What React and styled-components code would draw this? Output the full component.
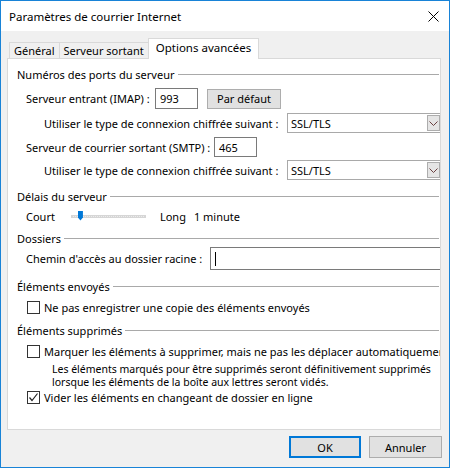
import React from "react"
import styled, { createGlobalStyle } from "styled-components"

const FONT = '"Noto Sans", "Open Sans", sans-serif'

const Global = createGlobalStyle`
  html, body { margin: 0; padding: 0; background: #fff; }
  body { font-family: ${FONT}; font-size: 11px; color: #000; }
  * { box-sizing: border-box; }
`

const Window = styled.div`
  width: 450px;
  height: 468px;
  border: 1px solid #1883d7;
  display: flex;
  flex-direction: column;
  overflow: hidden;
`

const TitleBar = styled.div`
  height: 30px;
  flex: none;
  background: #fff;
  display: flex;
  align-items: center;
  justify-content: space-between;
  padding: 0 10px 0 8px;
  font-size: 11.5px;
`

const Body = styled.div`
  flex: 1;
  background: #f0f0f0;
  padding: 7px 8px 0 6px;
  display: flex;
  flex-direction: column;
`

const TabStrip = styled.div`
  height: 20px;
  display: flex;
  align-items: flex-end;
  padding-left: 2px;
`

const Tab = styled.div`
  height: ${p => (p.active ? "21px" : "16px")};
  padding: 0 ${p => (p.active ? "7px" : "4px")};
  border: 1px solid #d9d9d9;
  border-bottom: none;
  border-right: ${p => (p.last ? "1px solid #d9d9d9" : "none")};
  background: ${p => (p.active ? "#fff" : "#f0f0f0")};
  display: flex;
  align-items: center;
  padding-bottom: ${p => (p.active ? "3px" : "0")};
  position: relative;
  margin-bottom: ${p => (p.active ? "-1px" : "0")};
  z-index: ${p => (p.active ? 1 : 0)};
  white-space: nowrap;
  font-size: ${p => (p.active ? "11.5px" : "11px")};
`

const Panel = styled.div`
  height: 372px;
  flex: none;
  background: #fff;
  border: 1px solid #d9d9d9;
  padding: 0 0 0 9px;
  display: flex;
  flex-direction: column;
  overflow: hidden;
`

const Group = styled.div`
  height: 16px;
  margin-top: ${p => p.mt}px;
  margin-right: 1px;
  display: flex;
  align-items: center;
  gap: 3px;
  white-space: nowrap;
  &::after {
    content: "";
    flex: 1;
    height: 1px;
    background: #a9a9a9;
    margin-top: 1px;
  }
`

const Row = styled.div`
  height: ${p => p.h || 16}px;
  margin-top: ${p => p.mt}px;
  padding-left: ${p => p.indent}px;
  display: flex;
  align-items: center;
  white-space: nowrap;
`

const Label = styled.span`
  width: ${p => (p.w ? p.w + "px" : "auto")};
  margin-left: ${p => p.ml || 0}px;
  flex: none;
`

const TextBox = styled.div`
  width: ${p => p.w}px;
  height: ${p => p.h || 21}px;
  flex: none;
  border: 1px solid #7a7a7a;
  background: #fff;
  display: flex;
  align-items: center;
  padding-left: 4px;
`

const Caret = styled.span`
  width: 1px;
  height: 14px;
  background: #000;
`

const Button = styled.div`
  width: ${p => p.w}px;
  height: ${p => p.h || 21}px;
  flex: none;
  border: ${p => (p.primary ? "2px solid #0078d7" : "1px solid #adadad")};
  background: #e1e1e1;
  display: flex;
  align-items: center;
  justify-content: center;
  margin-left: ${p => p.ml || 0}px;
`

const Select = styled.div`
  width: 153px;
  height: 20px;
  flex: none;
  margin-left: auto;
  border: 1px solid #a9a9a9;
  border-right: none;
  background: #fff;
  display: flex;
  align-items: center;
  padding-left: 3px;
`

const Arrow = styled.div`
  width: 13px;
  height: 16px;
  margin-left: auto;
  background: #e5e5e5;
  border: 1px solid #adadad;
  display: flex;
  align-items: center;
  justify-content: center;
`

const Slider = styled.div`
  width: 75px;
  height: 3px;
  margin: 0 14px 0 16px;
  background: repeating-linear-gradient(90deg, #d6d6d6 0 1px, #ececec 1px 2px);
  border: 1px solid #d6d6d6;
  position: relative;
`

const Thumb = styled.div`
  position: absolute;
  left: 6px;
  top: -5px;
  width: 5px;
  height: 10px;
  background: #0078d7;
  clip-path: polygon(0 0, 100% 0, 100% 70%, 50% 100%, 0 70%);
`

const Check = styled.div`
  width: 13px;
  height: 13px;
  flex: none;
  border: 1px solid #333;
  background: #fff;
  margin-right: 4px;
  display: flex;
  align-items: center;
  justify-content: center;
`

const Clip = styled.span`
  overflow: hidden;
`

const Note = styled.div`
  margin-top: 4px;
  padding-left: 35px;
  line-height: 13px;
  font-size: 10.5px;
  white-space: nowrap;
`

const Footer = styled.div`
  display: flex;
  justify-content: flex-end;
  margin-top: 6px;
  margin-right: -1px;
`

const Chevron = () => (
  <svg width="9" height="5" viewBox="0 0 9 5">
    <path d="M0.5 0.5 L4.5 4.5 L8.5 0.5" fill="none" stroke="#6b4040" strokeWidth="1" />
  </svg>
)

const Close = () => (
  <svg width="11" height="11" viewBox="0 0 11 11">
    <path d="M0.5 0.5 L10.5 10.5 M10.5 0.5 L0.5 10.5" stroke="#000" strokeWidth="1" />
  </svg>
)

const Tick = () => (
  <svg width="11" height="11" viewBox="0 0 11 11">
    <path d="M1.5 5.5 L4 8.5 L9.5 1.5" fill="none" stroke="#222" strokeWidth="1.2" />
  </svg>
)

export default function App() {
  return (
    <>
      <Global />
      <Window>
        <TitleBar>
          <span>Paramètres de courrier Internet</span>
          <Close />
        </TitleBar>
        <Body>
          <TabStrip>
            <Tab>Général</Tab>
            <Tab>Serveur sortant</Tab>
            <Tab active last>Options avancées</Tab>
          </TabStrip>
          <Panel>
            <Group mt={7}>Numéros des ports du serveur</Group>
            <Row h={21} mt={6} indent={9}>
              <Label w={129}>Serveur entrant (IMAP) :</Label>
              <TextBox w={43}>993</TextBox>
              <Button w={74} h={20} ml={9}>Par défaut</Button>
            </Row>
            <Row h={20} mt={4} indent={27}>
              <Label>Utiliser le type de connexion chiffrée suivant :</Label>
              <Select>SSL/TLS<Arrow><Chevron /></Arrow></Select>
            </Row>
            <Row h={20} mt={4} indent={9}>
              <Label w={188}>Serveur de courrier sortant (SMTP) :</Label>
              <TextBox w={43} h={20}>465</TextBox>
            </Row>
            <Row h={20} mt={3} indent={27}>
              <Label>Utiliser le type de connexion chiffrée suivant :</Label>
              <Select>SSL/TLS<Arrow><Chevron /></Arrow></Select>
            </Row>
            <Group mt={8}>Délais du serveur</Group>
            <Row mt={4} indent={9}>
              <Label>Court</Label>
              <Slider><Thumb /></Slider>
              <Label>Long</Label>
              <Label ml={8}>1 minute</Label>
            </Row>
            <Group mt={6}>Dossiers</Group>
            <Row h={23} mt={1} indent={9}>
              <Label w={184}>Chemin d'accès au dossier racine :</Label>
              <TextBox w={240} h={23}><Caret /></TextBox>
            </Row>
            <Group mt={8}>Éléments envoyés</Group>
            <Row mt={5} indent={10}>
              <Check />
              <Label>Ne pas enregistrer une copie des éléments envoyés</Label>
            </Row>
            <Group mt={7}>Éléments supprimés</Group>
            <Row mt={5} indent={10}>
              <Check />
              <Clip>Marquer les éléments à supprimer, mais ne pas les déplacer automatiquement</Clip>
            </Row>
            <Note>
              Les éléments marqués pour être supprimés seront définitivement supprimés<br />
              lorsque les éléments de la boîte aux lettres seront vidés.
            </Note>
            <Row mt={0} indent={10}>
              <Check><Tick /></Check>
              <Label>Vider les éléments en changeant de dossier en ligne</Label>
            </Row>
          </Panel>
          <Footer>
            <Button w={72} h={22} primary>OK</Button>
            <Button w={73} h={22} ml={8}>Annuler</Button>
          </Footer>
        </Body>
      </Window>
    </>
  )
}
